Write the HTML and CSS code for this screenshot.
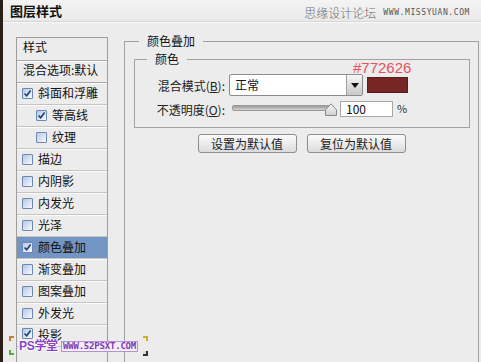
FILE: index.html
```html
<!DOCTYPE html>
<html lang="zh-CN">
<head>
<meta charset="UTF-8">
<meta name="viewport" content="width=device-width, initial-scale=1.0">
<title>图层样式</title>
<link rel="stylesheet" href="styles.css">
</head>
<body>
<div class="window">
    <div class="titlebar">
        <h1>图层样式</h1>
        <div class="site"><span class="site-name">思缘设计论坛</span><span class="site-url">WWW.MISSYUAN.COM</span></div>
    </div>
    <div class="content">
        <ul class="style-list">
            <li class="head">样式</li>
            <li class="head-sub">混合选项:默认</li>
            <li><span class="check"><svg viewBox="0 0 11 11" width="11" height="11"><path d="M2.5 5.5 L4.7 7.8 L8.6 2.6" fill="none" stroke="#1d3d78" stroke-width="1.6"/></svg></span>斜面和浮雕</li>
            <li class="sub"><span class="check"><svg viewBox="0 0 11 11" width="11" height="11"><path d="M2.5 5.5 L4.7 7.8 L8.6 2.6" fill="none" stroke="#1d3d78" stroke-width="1.6"/></svg></span>等高线</li>
            <li class="sub"><span class="check"></span>纹理</li>
            <li><span class="check"></span>描边</li>
            <li><span class="check"></span>内阴影</li>
            <li><span class="check"></span>内发光</li>
            <li><span class="check"></span>光泽</li>
            <li class="selected"><span class="check"><svg viewBox="0 0 11 11" width="11" height="11"><path d="M2.5 5.5 L4.7 7.8 L8.6 2.6" fill="none" stroke="#1d3d78" stroke-width="1.6"/></svg></span>颜色叠加</li>
            <li><span class="check"></span>渐变叠加</li>
            <li><span class="check"></span>图案叠加</li>
            <li><span class="check"></span>外发光</li>
            <li class="last"><span class="check"><svg viewBox="0 0 11 11" width="11" height="11"><path d="M2.5 5.5 L4.7 7.8 L8.6 2.6" fill="none" stroke="#1d3d78" stroke-width="1.6"/></svg></span>投影</li>
        </ul>

        <div class="group outer">
            <div class="legend">颜色叠加</div>
            <div class="group inner">
                <div class="legend">颜色</div>
                <div class="row first">
                    <label class="field-label">混合模式(<u>B</u>):</label>
                    <div class="select">
                        <span class="select-value">正常</span>
                        <span class="select-btn"><svg viewBox="0 0 8 5" width="8" height="5"><path d="M0 0 L8 0 L4 5 Z" fill="#111"/></svg></span>
                    </div>
                    <div class="swatch"></div>
                </div>
                <div class="row second">
                    <label class="field-label">不透明度(<u>O</u>):</label>
                    <div class="slider">
                        <div class="track"></div>
                        <svg class="thumb" viewBox="0 0 12 13" width="12" height="13"><defs><linearGradient id="tg" x1="0" y1="0" x2="0" y2="1"><stop offset="0" stop-color="#fbfbfb"/><stop offset="1" stop-color="#cfcfcf"/></linearGradient></defs><path d="M0.5 12.5 L0.5 7 L6 0.8 L11.5 7 L11.5 12.5 Z" fill="url(#tg)" stroke="#8a8a8a"/></svg>
                    </div>
                    <div class="num-input">100</div>
                    <span class="unit">%</span>
                </div>
            </div>
            <div class="buttons">
                <button class="btn">设置为默认值</button>
                <button class="btn">复位为默认值</button>
            </div>
            <div class="hex-note">#772626</div>
        </div>
    </div>

    <div class="watermark">
        <span class="corner tl"></span>
        <span class="corner bl"></span>
        <span class="corner tr"></span>
        <span class="corner br"></span>
        <span class="wm-logo">PS学堂</span>
        <span class="wm-url">WWW.52PSXT.COM</span>
    </div>
</div>
</body>
</html>
```

FILE: styles.css
```css
body {
    margin: 0;
    padding: 0;
    font-family: "Noto Sans CJK SC", "Noto Sans", sans-serif;
    font-size: 12px;
    color: #111;
}
.window {
    position: relative;
    width: 481px;
    height: 362px;
    box-sizing: border-box;
    overflow: hidden;
    background: #ececec;
    border-left: 3px solid #2a2018;
    display: flex;
    flex-direction: column;
}
.titlebar {
    height: 22px;
    flex: none;
    display: flex;
    align-items: center;
    justify-content: space-between;
    padding: 1px 11px 0 7px;
    box-sizing: border-box;
    background: linear-gradient(#f4f4f4, #e9e9e9);
    border-bottom: 1px solid #d6d6d6;
    box-shadow: 0 1px 0 #fafafa;
}
.titlebar h1 {
    margin: 0;
    font-size: 13px;
    font-weight: bold;
    line-height: 16px;
    color: #111;
}
.site {
    display: flex;
    align-items: center;
    gap: 7px;
    padding-top: 3px;
}
.site-name {
    font-size: 12px;
    line-height: 14px;
    color: #6e6e6e;
    font-weight: 300;
}
.site-url {
    font-family: "DejaVu Sans Mono", monospace;
    font-size: 8px;
    letter-spacing: 0.6px;
    color: #555;
    line-height: 10px;
}
.content {
    flex: 1;
    display: flex;
    align-items: flex-start;
    gap: 16px;
    padding: 15px 0 0 13px;
}
.style-list {
    list-style: none;
    margin: 0;
    padding: 0;
    width: 92px;
    height: 340px;
    flex: none;
    box-sizing: border-box;
    border: 1px solid #9d9d9d;
}
.style-list li {
    height: 22px;
    box-sizing: border-box;
    display: flex;
    align-items: center;
    gap: 5px;
    padding: 0 0 1px 5px;
    border-bottom: 1px solid #c4c4c4;
    box-shadow: inset 0 1px 0 #fbfbfb;
    line-height: 14px;
    white-space: nowrap;
}
.style-list li.head {
    height: 23px;
    padding: 0 0 4px 6px;
    border-bottom-color: #a8a8a8;
    box-shadow: none;
}
.style-list li.head-sub {
    padding: 0 0 3px 6px;
    border-bottom-color: #a8a8a8;
}
.style-list li.sub {
    padding-left: 19px;
}
.style-list li.selected {
    background: #7295c3;
    box-shadow: none;
}
.style-list li.last {
    align-items: flex-start;
    padding-top: 3px;
}
.check {
    width: 11px;
    height: 11px;
    flex: none;
    box-sizing: border-box;
    border: 1px solid #6d88b3;
    border-radius: 1px;
    background: linear-gradient(135deg, #b6c9e4, #f7f9fc);
    display: flex;
    align-items: center;
    justify-content: center;
}
.check svg {
    display: block;
    margin: -1px;
}
.group {
    box-sizing: border-box;
    border: 1px solid #a2a2a2;
}
.outer {
    position: relative;
    width: 355px;
    height: 340px;
    margin-top: 4px;
}
.legend {
    width: max-content;
    margin: -8px 0 0 14px;
    padding: 0 8px;
    background: #ececec;
    line-height: 14px;
    font-size: 12px;
}
.inner {
    height: 69px;
    margin: 11px 8px 0 9px;
}
.inner .legend {
    margin-left: 12px;
}
.row {
    display: flex;
    align-items: center;
}
.row.first {
    height: 22px;
    margin-top: 8px;
}
.row.second {
    height: 16px;
    margin-top: 5px;
}
.field-label {
    width: 90px;
    text-align: right;
    white-space: nowrap;
    color: #222;
}
.field-label u {
    text-decoration: underline;
    text-underline-offset: 1px;
}
.select {
    width: 134px;
    height: 22px;
    margin-left: 4px;
    box-sizing: border-box;
    display: flex;
    align-items: stretch;
    background: #fff;
    border: 1px solid #8c8c8c;
    border-radius: 2px;
}
.select-value {
    flex: 1;
    padding-left: 5px;
    line-height: 19px;
    font-size: 12px;
}
.select-btn {
    width: 15px;
    display: flex;
    align-items: center;
    justify-content: center;
    border-left: 1px solid #a0a0a0;
    background: linear-gradient(#f6f6f6, #c9c9c9);
    border-radius: 0 1px 1px 0;
}
.swatch {
    width: 41px;
    height: 16px;
    margin-left: 4px;
    background: #772626;
    border: 1px solid #5c1c1c;
    box-sizing: border-box;
}
.slider {
    position: relative;
    width: 105px;
    height: 16px;
    margin-left: 7px;
    display: flex;
    align-items: center;
}
.track {
    width: 100px;
    height: 4px;
    border-radius: 2px;
    background: linear-gradient(#9a9a9a, #d4d4d4);
    border: 1px solid #9b9b9b;
    margin-top: -3px;
}
.thumb {
    position: absolute;
    right: 0;
    top: 2px;
}
.num-input {
    width: 53px;
    height: 16px;
    margin-left: 3px;
    box-sizing: border-box;
    background: #fff;
    border: 1px solid #a8a8a8;
    padding-left: 5px;
    font-size: 12px;
    line-height: 14px;
}
.unit {
    margin-left: 4px;
    font-size: 11px;
    color: #333;
    margin-top: -3px;
}
.buttons {
    display: flex;
    justify-content: center;
    gap: 10px;
    margin-top: 6px;
}
.btn {
    width: 99px;
    height: 19px;
    padding: 0;
    font-family: "Noto Sans CJK SC", sans-serif;
    font-size: 12px;
    line-height: 16px;
    color: #222;
    background: linear-gradient(#fbfbfb, #dcdcdc);
    border: 1px solid #8e8e8e;
    border-radius: 3px;
}
.hex-note {
    position: absolute;
    left: 228px;
    top: 18px;
    font-family: "Liberation Sans", Arial, sans-serif;
    font-size: 15px;
    line-height: 15px;
    color: #e4525e;
}
.watermark {
    position: absolute;
    left: 3px;
    top: 336px;
    width: 144px;
    height: 20px;
}
.corner {
    position: absolute;
    width: 5px;
    height: 5px;
    box-sizing: border-box;
}
.corner.tl { left: 3px; top: 0; border-top: 2px solid #c0804a; border-left: 2px solid #c0804a; background: #f3e3c8; }
.corner.bl { left: 3px; top: 14px; border-bottom: 2px solid #5aa84a; border-left: 2px solid #5aa84a; background: #dff0d0; }
.corner.tr { left: 137px; top: 0; border-top: 2px solid #c8b030; border-right: 2px solid #c8b030; background: #f6f0c0; }
.corner.br { left: 137px; top: 15px; border-bottom: 2px solid #333; border-right: 2px solid #333; background: #ddd; }
.wm-logo {
    position: absolute;
    left: 13px;
    top: 3px;
    font-family: "Liberation Sans", "Noto Sans CJK SC", sans-serif;
    font-size: 12px;
    font-weight: bold;
    line-height: 14px;
    letter-spacing: -0.3px;
    color: #8a3fc4;
    text-shadow: 1px 0 0 #fff, -1px 0 0 #fff, 0 1px 0 #fff, 0 -1px 0 #fff;
}
.wm-url {
    position: absolute;
    left: 56px;
    top: 6px;
    padding: 0 1px;
    font-family: "DejaVu Sans Mono", monospace;
    font-size: 9px;
    font-weight: bold;
    line-height: 9px;
    letter-spacing: -0.2px;
    color: #7a3cb0;
    background: #f4eef8;
    outline: 1px solid #b890d8;
}
```
